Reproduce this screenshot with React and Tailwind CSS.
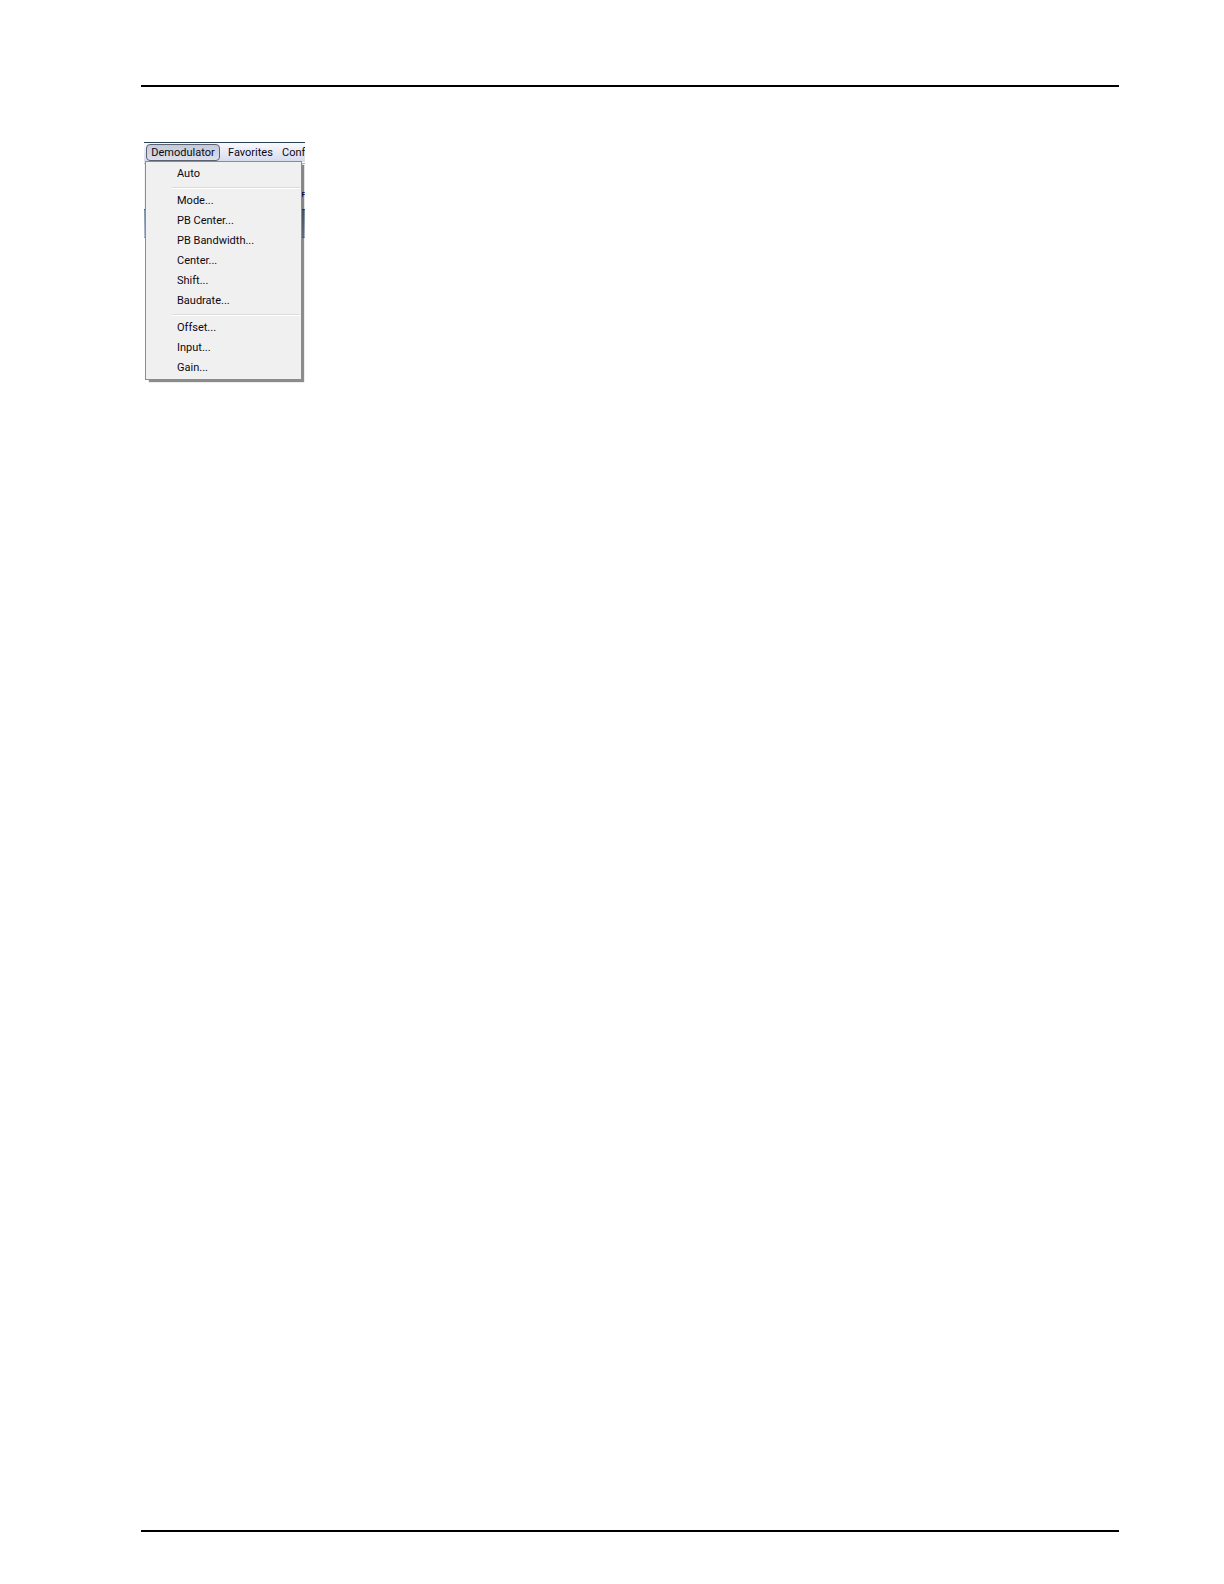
const groups = [
  ["Auto"],
  ["Mode...", "PB Center...", "PB Bandwidth...", "Center...", "Shift...", "Baudrate..."],
  ["Offset...", "Input...", "Gain..."],
];

const MenuBar = () => (
  <nav className="flex h-5 items-start border-t border-[#2f4358] bg-linear-to-b from-[#f8f9fd] to-[#d5daec] whitespace-nowrap">
    <button className="mt-px ml-0.5 h-[17px] w-[74px] shrink-0 rounded-sm border border-[#5b6070] bg-linear-to-b from-[#c5cad9] to-[#dce0ec] text-center leading-[15px]">
      Demodulator
    </button>
    <button className="mt-px ml-2 w-11 shrink-0 text-left leading-[17px]">Favorites</button>
    <button className="mt-px ml-[10px] shrink-0 leading-[17px]">Conf</button>
  </nav>
);

const DropDown = () => (
  <div
    role="menu"
    className="absolute top-[19px] left-px w-[157px] border border-[#8c8c8c] bg-[#f0f0f0] px-px pt-0.5 pb-px shadow-[3px_3px_1px_-1px_rgba(0,0,0,0.45)]"
  >
    {groups.map((items, i) => (
      <div key={items[0]}>
        {i > 0 && (
          <div className="ml-[25px] h-[7px] pt-[3px]">
            <hr className="border-[#dcdcdc]" />
            <hr className="border-white" />
          </div>
        )}
        {items.map((label) => (
          <button key={label} role="menuitem" className="block h-5 w-full pl-[30px] text-left leading-5">
            {label}
          </button>
        ))}
      </div>
    ))}
  </div>
);

const App = () => (
  <div className="flex min-h-screen flex-col bg-white pt-[85px] pr-[105px] pb-[52px] pl-[141px] font-[Roboto,'Open_Sans',sans-serif] text-[11px] text-[#0c0812]">
    <hr className="border-t-2 border-black" />

    <main className="grow pt-[55px] pl-[3px]">
      <div className="relative h-60 w-[161px]">
        <div className="overflow-hidden">
          <MenuBar />
          {/* Window content behind the open menu */}
          <div className="h-0.5 border-b border-[#b5b5b5] bg-white" />
          <div className="flex h-[46px] items-center justify-end border-b border-[#555] bg-[#f4f4f4] pt-4">
            <span className="text-[7px] leading-2 font-bold text-[#1b1b6b]">F</span>
          </div>
          <div className="h-7 border-b border-[#8d9bb0] bg-linear-to-b from-[#8195b0] to-[#b4c3d8]" />
        </div>
        <DropDown />
      </div>
    </main>

    <hr className="border-t-2 border-black" />
  </div>
);

export default App;
